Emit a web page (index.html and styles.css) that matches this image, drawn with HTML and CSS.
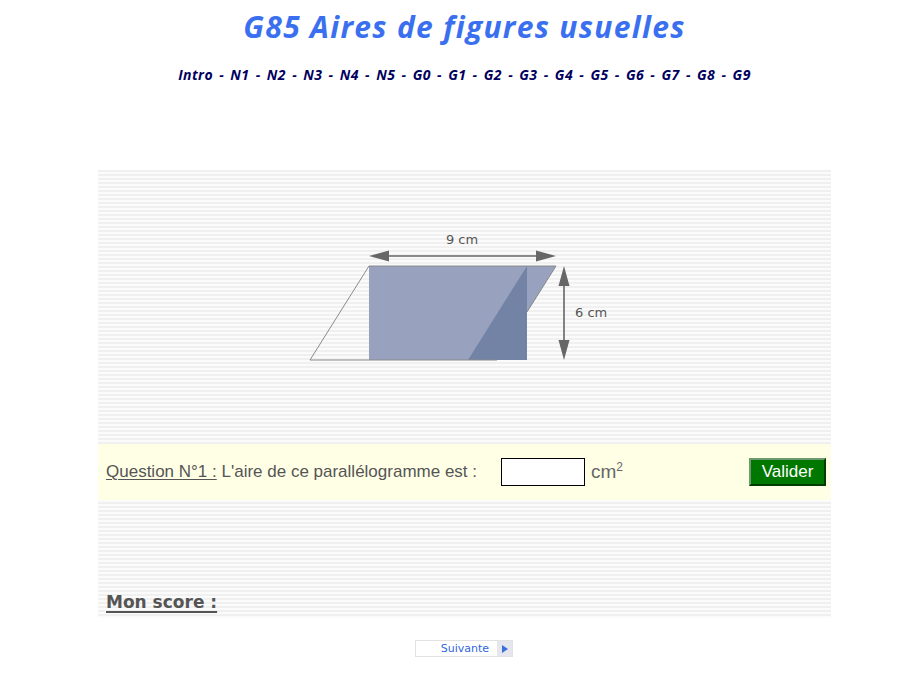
FILE: index.html
```html
<!DOCTYPE html>
<html lang="fr">
<head>
<meta charset="utf-8">
<title>G85 Aires de figures usuelles</title>
<link rel="stylesheet" href="styles.css">
</head>
<body>
<div class="page">
  <h1 class="title">G85 Aires de figures usuelles</h1>
  <nav class="nav">Intro - N1 - N2 - N3 - N4 - N5 - G0 - G1 - G2 - G3 - G4 - G5 - G6 - G7 - G8 - G9</nav>
  <div class="panel">
    <div class="figure">
      <svg width="320" height="150" viewBox="0 0 320 150" xmlns="http://www.w3.org/2000/svg">
        <polygon points="69,41 256,41 197,135 69,135" fill="#98a2be"/>
        <polygon points="168,135 227,41 227,135" fill="#7283a6"/>
        <polyline points="197,135 10,135 69,41 256,41 227,87" fill="none" stroke="#8a8a8a" stroke-width="1"/>
        <line x1="85" y1="31" x2="240" y2="31" stroke="#666" stroke-width="1.6"/>
        <polygon points="69,31 89,25.5 89,36.5" fill="#666"/>
        <polygon points="256,31 236,25.5 236,36.5" fill="#666"/>
        <line x1="264" y1="57" x2="264" y2="119" stroke="#666" stroke-width="1.6"/>
        <polygon points="264,41 258.5,61 269.5,61" fill="#666"/>
        <polygon points="264,135 258.5,115 269.5,115" fill="#666"/>
        <text x="162" y="19" text-anchor="middle" class="dim">9 cm</text>
        <text x="275" y="92" class="dim">6 cm</text>
      </svg>
    </div>
    <div class="question">
      <span class="qlabel"><u>Question N°1 :</u> L'aire de ce parallélogramme est :</span>
      <span class="answer"><input class="field" type="text"><span class="unit">cm<sup>2</sup></span></span>
      <button class="valider" type="button">Valider</button>
    </div>
    <div class="spacer"></div>
    <div class="score"><u>Mon score :</u></div>
  </div>
  <div class="next">
    <span class="next-label">Suivante</span>
    <span class="next-arrow"><svg width="6" height="8" viewBox="0 0 6 8"><polygon points="0,0 6,4 0,8" fill="#3b6fd9"/></svg></span>
  </div>
</div>
</body>
</html>
```
FILE: styles.css
```css
html, body {
  margin: 0;
  padding: 0;
  background: #ffffff;
}
.page {
  width: 733px;
  margin-left: 98px;
  display: flex;
  flex-direction: column;
  align-items: stretch;
}
.title {
  margin: 8px 0 0 0;
  height: 38px;
  line-height: 38px;
  text-align: center;
  font-family: "Open Sans", Lato, sans-serif;
  font-style: italic;
  font-weight: 700;
  font-size: 30px;
  letter-spacing: 1.3px;
  color: #3a70f0;
}
.nav {
  margin-top: 20px;
  height: 18px;
  line-height: 18px;
  text-align: center;
  font-family: "Open Sans", Lato, sans-serif;
  font-style: italic;
  font-weight: 700;
  font-size: 14px;
  color: #00005e;
  letter-spacing: 0.4px;
  word-spacing: 2.2px;
}
.panel {
  margin-top: 86px;
  height: 448px;
  display: flex;
  flex-direction: column;
  background: repeating-linear-gradient(to bottom, #f0f0f0 0px, #f0f0f0 2px, #fbfbfb 2px, #fbfbfb 4px);
}
.figure {
  height: 274px;
  padding-left: 202px;
  padding-top: 55px;
  box-sizing: border-box;
}
.figure svg {
  display: block;
}
.dim {
  font-family: "DejaVu Sans", Verdana, sans-serif;
  font-size: 13px;
  fill: #555555;
}
.question {
  height: 56px;
  background: #ffffe6;
  display: flex;
  align-items: center;
  padding-left: 8px;
  padding-right: 5px;
  font-family: "Liberation Sans", Arial, sans-serif;
  font-size: 17px;
  color: #555555;
}
.qlabel {
  width: 395px;
}
.qlabel u {
  text-decoration-thickness: 1px;
  text-underline-offset: 2px;
}
.answer {
  display: flex;
  align-items: center;
  gap: 6px;
}
.field {
  width: 84px;
  height: 28px;
  box-sizing: border-box;
  border: 1px solid #000;
  margin: 0;
  padding: 0;
  background: #fff;
}
.unit {
  font-size: 19px;
  color: #666666;
}
.unit sup {
  font-size: 12px;
  vertical-align: 7px;
  line-height: 0;
}
.valider {
  margin-left: auto;
  width: 77px;
  height: 28px;
  box-sizing: border-box;
  background: #007800;
  color: #ffffff;
  font-family: "Liberation Sans", Arial, sans-serif;
  font-size: 17px;
  border-style: solid;
  border-width: 2px;
  border-color: #6f9a6f #003c00 #003c00 #6f9a6f;
  padding: 0;
}
.spacer {
  flex: 1;
}
.score {
  height: 20px;
  padding-left: 8px;
  margin-bottom: 6px;
  font-family: "DejaVu Sans", Verdana, sans-serif;
  font-weight: 700;
  font-size: 17px;
  color: #555555;
}
.score u {
  text-decoration-thickness: 2px;
  text-underline-offset: 3px;
}
.next {
  margin-top: 22px;
  align-self: flex-start;
  margin-left: 317px;
  display: flex;
  height: 17px;
  box-sizing: border-box;
  border: 1px solid #e2e2e2;
}
.next-label {
  width: 81px;
  box-sizing: border-box;
  padding-right: 8px;
  text-align: right;
  font-family: "DejaVu Sans", Verdana, sans-serif;
  font-size: 11px;
  line-height: 15px;
  color: #2f66e0;
  background: #fff;
}
.next-arrow {
  width: 15px;
  background: #e6e6ee;
  display: flex;
  align-items: center;
  justify-content: center;
}
```
